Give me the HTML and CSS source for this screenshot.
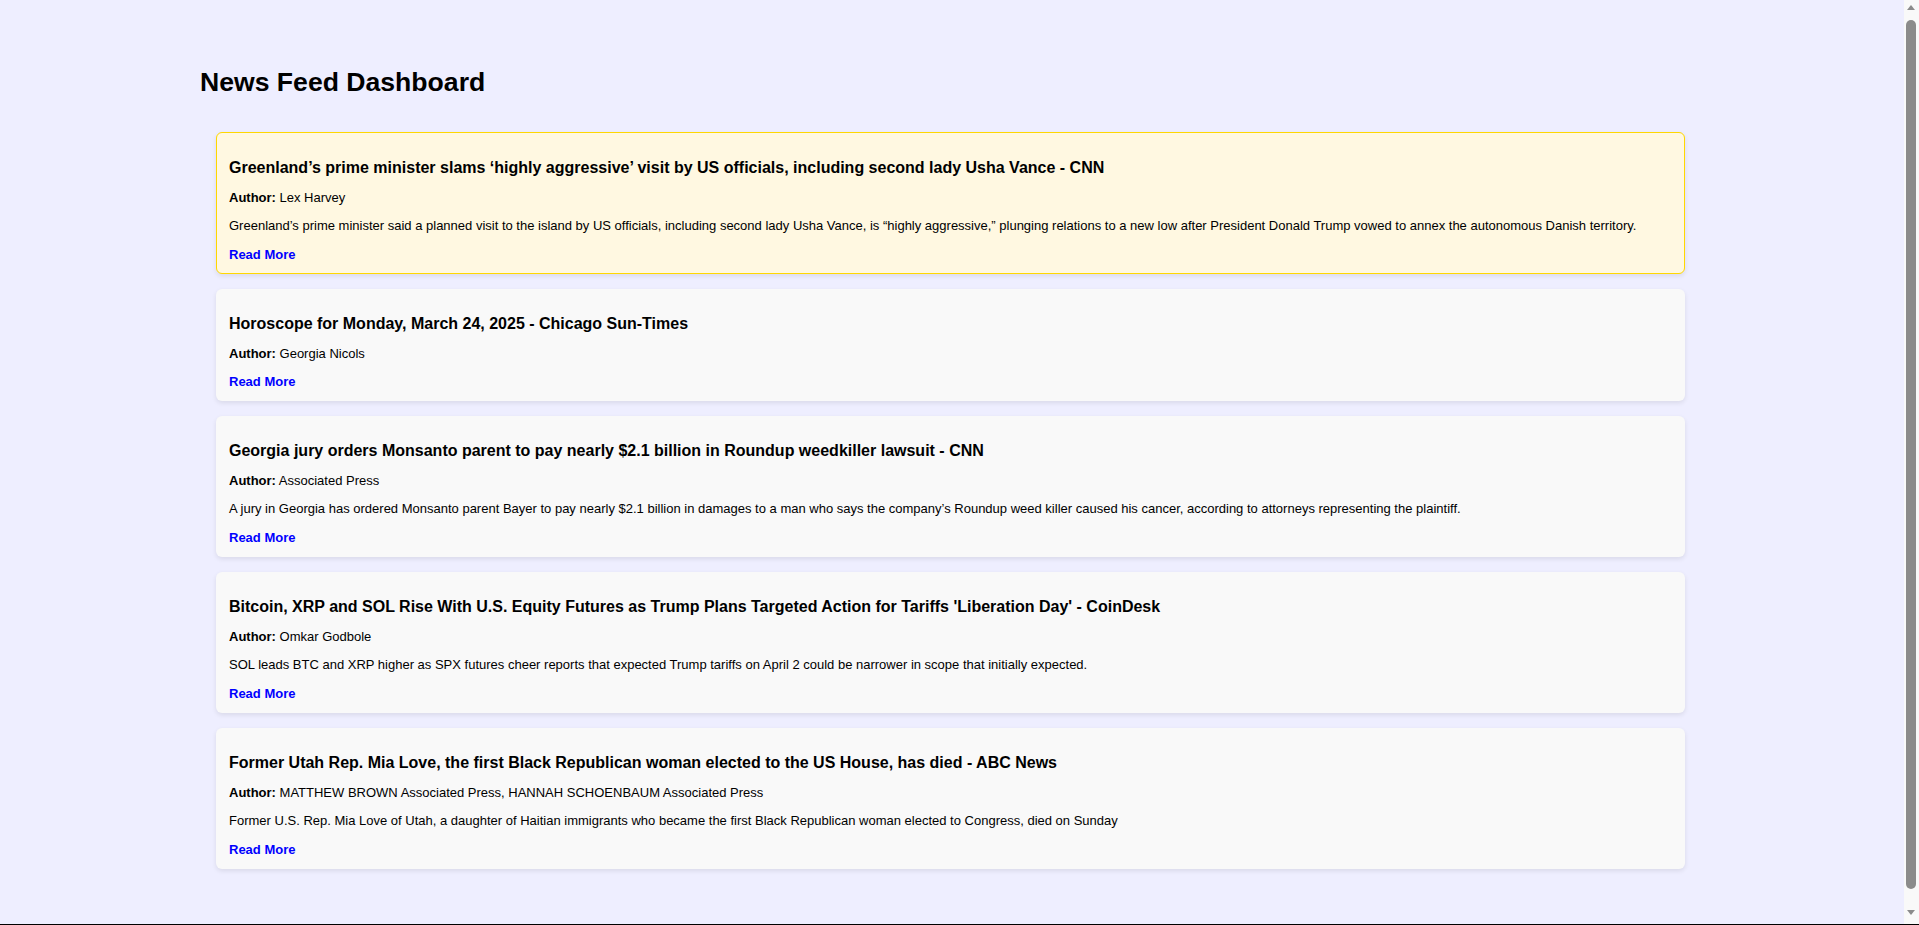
FILE: index.html
```html
<!DOCTYPE html>
<html lang="en">
<head>
<meta charset="utf-8">
<title>News Feed Dashboard</title>
<link rel="stylesheet" href="styles.css">
</head>
<body>
<div class="page">
  <h1 class="page-title">News Feed Dashboard</h1>
  <div class="feed">
    <article class="card card-featured">
      <h2 class="card-title">Greenland’s prime minister slams ‘highly aggressive’ visit by US officials, including second lady Usha Vance - CNN</h2>
      <p class="card-author"><strong>Author:</strong> Lex Harvey</p>
      <p class="card-desc">Greenland’s prime minister said a planned visit to the island by US officials, including second lady Usha Vance, is “highly aggressive,” plunging relations to a new low after President Donald Trump vowed to annex the autonomous Danish territory.</p>
      <a class="card-link" href="#">Read More</a>
    </article>
    <article class="card">
      <h2 class="card-title">Horoscope for Monday, March 24, 2025 - Chicago Sun-Times</h2>
      <p class="card-author"><strong>Author:</strong> Georgia Nicols</p>
      <a class="card-link" href="#">Read More</a>
    </article>
    <article class="card">
      <h2 class="card-title">Georgia jury orders Monsanto parent to pay nearly $2.1 billion in Roundup weedkiller lawsuit - CNN</h2>
      <p class="card-author"><strong>Author:</strong> Associated Press</p>
      <p class="card-desc">A jury in Georgia has ordered Monsanto parent Bayer to pay nearly $2.1 billion in damages to a man who says the company’s Roundup weed killer caused his cancer, according to attorneys representing the plaintiff.</p>
      <a class="card-link" href="#">Read More</a>
    </article>
    <article class="card">
      <h2 class="card-title">Bitcoin, XRP and SOL Rise With U.S. Equity Futures as Trump Plans Targeted Action for Tariffs 'Liberation Day' - CoinDesk</h2>
      <p class="card-author"><strong>Author:</strong> Omkar Godbole</p>
      <p class="card-desc">SOL leads BTC and XRP higher as SPX futures cheer reports that expected Trump tariffs on April 2 could be narrower in scope that initially expected.</p>
      <a class="card-link" href="#">Read More</a>
    </article>
    <article class="card">
      <h2 class="card-title">Former Utah Rep. Mia Love, the first Black Republican woman elected to the US House, has died - ABC News</h2>
      <p class="card-author"><strong>Author:</strong> MATTHEW BROWN Associated Press, HANNAH SCHOENBAUM Associated Press</p>
      <p class="card-desc">Former U.S. Rep. Mia Love of Utah, a daughter of Haitian immigrants who became the first Black Republican woman elected to Congress, died on Sunday</p>
      <a class="card-link" href="#">Read More</a>
    </article>
  </div>
</div>
<div class="scrollbar" aria-hidden="true">
  <span class="sb-arrow sb-up"></span>
  <span class="sb-thumb"></span>
  <span class="sb-arrow sb-down"></span>
</div>
<div class="window-edge" aria-hidden="true"></div>
</body>
</html>
```

FILE: styles.css
```css
html, body {
  margin: 0;
  padding: 0;
}

body {
  background: #eeeeff;
  color: #000;
  font-family: "Liberation Sans", Arial, sans-serif;
  padding-right: 15px;
}

.page {
  max-width: 1508px;
  margin: 0 auto;
  padding: 40px 0 40px;
}

.page-title {
  font-size: 26.6px;
  font-weight: bold;
  line-height: 32px;
  margin: 26px 0 34px 2px;
}

.feed {
  display: flex;
  flex-direction: column;
  gap: 15px;
  padding: 0 21px 0 18px;
}

.card {
  background: #f9f9f9;
  border-radius: 6px;
  box-shadow: 0 2px 5px rgba(0, 0, 0, 0.09);
  padding: 13px 13px 12px;
}

.card-featured {
  background: #fff8e1;
  border: 1px solid #ffd700;
  padding: 13px 12px 11px;
}

.card-title {
  font-size: 16px;
  font-weight: bold;
  line-height: 18px;
  margin: 13px 0;
}

.card-author,
.card-desc {
  font-size: 13px;
  line-height: 15px;
  margin: 13px 0;
}

.card-desc {
  margin-bottom: 14px;
}

.card-link {
  display: block;
  font-size: 13px;
  line-height: 15px;
  font-weight: bold;
  color: #0000ff;
  text-decoration: none;
}

/* classic window scrollbar */
.scrollbar {
  position: fixed;
  top: 0;
  right: 0;
  width: 15px;
  height: 100%;
  box-sizing: border-box;
  padding: 5px 2px 0 0;
  background: #f9f9f9;
  display: flex;
  flex-direction: column;
  align-items: center;
}

.sb-arrow {
  width: 0;
  height: 0;
  border-left: 4.5px solid transparent;
  border-right: 4.5px solid transparent;
}

.sb-up {
  border-bottom: 5px solid #8b8b8b;
}

.sb-down {
  margin-top: 21px;
  border-top: 5px solid #8b8b8b;
}

.sb-thumb {
  margin-top: 10px;
  width: 10px;
  height: 869px;
  border-radius: 5px;
  background: #8b8b8b;
}

.window-edge {
  position: fixed;
  left: 0;
  right: 0;
  bottom: 0;
  height: 1px;
  background: #000;
}
```
